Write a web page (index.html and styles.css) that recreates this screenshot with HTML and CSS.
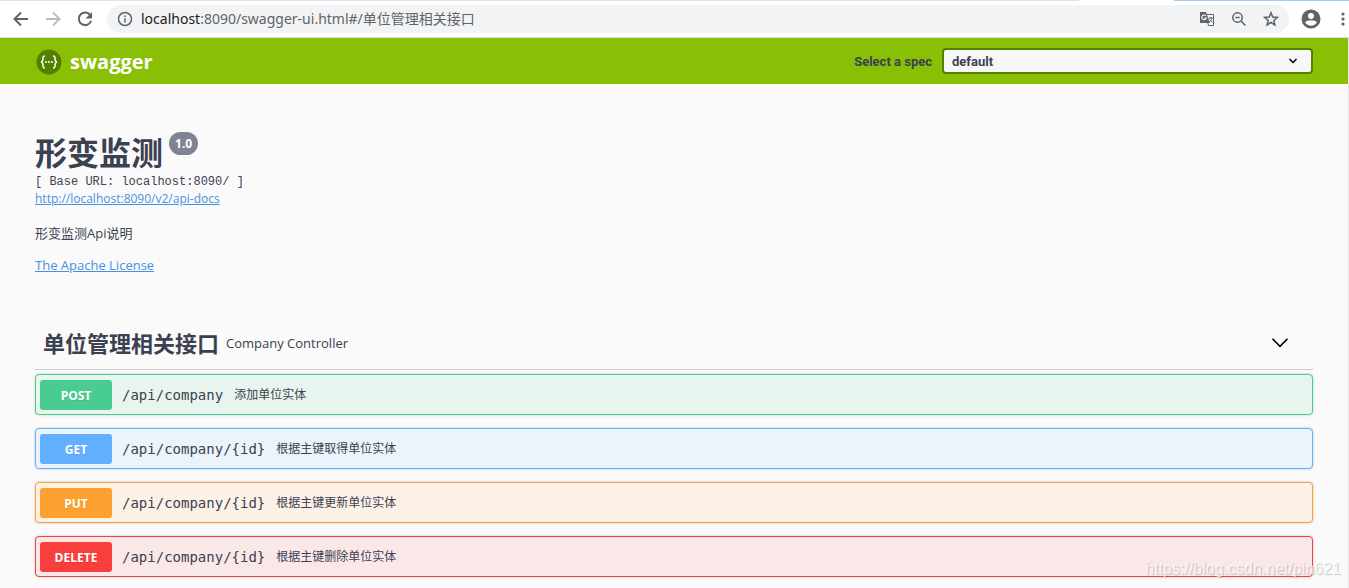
FILE: index.html
```html
<!DOCTYPE html>
<html lang="zh-CN">
<head>
<meta charset="utf-8">
<title>Swagger UI</title>
<link rel="stylesheet" href="styles.css">
</head>
<body>
<div class="tabline"></div>
<header class="browser">
  <nav class="nav">
    <button class="icon-btn" aria-label="Back"><svg class="ink" width="24" height="24" viewBox="0 0 24 24"><path d="M19 12H6M12 5.5 5.5 12l6.500 6.500"/></svg></button>
    <button class="icon-btn" aria-label="Forward"><svg class="ink faded" width="24" height="24" viewBox="0 0 24 24"><path d="M5 12h13M12 5.500 18.500 12 12 18.500"/></svg></button>
    <button class="icon-btn" aria-label="Reload"><svg class="ink" width="24" height="24" viewBox="0 0 24 24"><path d="M17.500 8.500A6.300 6.300 0 1 0 18.100 13.800"/><path class="solid" d="M19 5v6.500h-6.500z"/></svg></button>
  </nav>
  <div class="omnibox">
    <svg class="ink thin" width="16" height="16" viewBox="0 0 16 16"><circle cx="8" cy="8" r="6.500"/><path d="M8 7.200v4.200M8 4.500v1.500"/></svg>
    <div class="address"><span class="host">localhost</span>:8090/swagger-ui.html#/单位管理相关接口</div>
    <button class="icon-btn" aria-label="Translate"><svg width="16" height="16" viewBox="0 0 16 16"><path d="M6.500 3.500h8v11H9.500z" fill="#f8f9fa" stroke="#5f6368"/><path d="M1 1h6l3.800 11H1z" fill="#5f6368"/><path d="M7 5A2.300 2.300 0 1 0 7.300 7H5.200" fill="none" stroke="#fff" stroke-width="1.100"/><path d="M9.500 7h4.500M11.700 6v1M13 7c-.4 2-1.500 3-3 4M10.700 8.500l2.800 3" fill="none" stroke="#5f6368"/></svg></button>
    <button class="icon-btn" aria-label="Zoom"><svg class="ink thin" width="16" height="16" viewBox="0 0 16 16"><circle cx="6.500" cy="6.500" r="4.700"/><path d="m10 10 4.500 4.500M4.300 6.500h4.400"/></svg></button>
    <button class="icon-btn" aria-label="Bookmark"><svg class="ink thin" width="16" height="16" viewBox="0 0 16 16"><path d="m8 1.800 1.700 4.300 4.600.3-3.500 3 1.100 4.500L8 11.500l-3.900 2.400 1.100-4.500-3.500-3 4.600-.3z"/></svg></button>
  </div>
  <button class="icon-btn" aria-label="Profile"><svg width="20" height="20" viewBox="0 0 20 20"><circle cx="10" cy="10" r="9.500" fill="#5f6368"/><circle cx="10" cy="7" r="3" fill="#fff"/><path d="M4.200 13.500c1.500-3 10.100-3 11.600 0-2.600 4.200-9 4.200-11.600 0z" fill="#fff"/></svg></button>
  <button class="icon-btn menu" aria-label="Menu"><svg width="4" height="16" viewBox="0 0 4 16" fill="#5f6368"><circle cx="2" cy="3" r="1.600"/><circle cx="2" cy="8" r="1.600"/><circle cx="2" cy="13" r="1.600"/></svg></button>
</header>
<main class="page">
  <div class="topbar">
    <a class="brand" href="#">
      <svg width="26" height="26" viewBox="0 0 26 26"><circle cx="13" cy="13" r="12.500" fill="#547f00"/><path d="M9 7c-2 0-2 .8-2 2.500S7 12.800 5 13c2 .2 2 1.800 2 3.500S7 19 9 19M17 7c2 0 2 .8 2 2.500s0 3.300 2 3.500c-2 .2-2 1.800-2 3.500S19 19 17 19" fill="none" stroke="#fff" stroke-width="1.500"/><g fill="#fff"><circle cx="10" cy="13" r="1"/><circle cx="13" cy="13" r="1"/><circle cx="16" cy="13" r="1"/></g></svg>
      <span>swagger</span>
    </a>
    <label class="spec-label" for="spec">Select a spec</label>
    <span class="select-wrap">
      <select class="spec" id="spec"><option>default</option></select>
      <svg class="select-arrow" width="10" height="8" viewBox="0 0 10 8"><path d="m1.500 2 3.500 3.500L8.500 2" fill="none" stroke="#000" stroke-width="1.500"/></svg>
    </span>
  </div>
  <section class="info">
    <div class="title-row"><h1>形变监测</h1><span class="version">1.0</span></div>
    <div class="base">[ Base URL: localhost:8090/ ]</div>
    <a class="docs" href="#">http://localhost:8090/v2/api-docs</a>
    <p class="about">形变监测Api说明</p>
    <a class="license" href="#">The Apache License</a>
  </section>
  <section class="ops">
    <div class="tag">
      <h2>单位管理相关接口</h2><span class="tag-note">Company Controller</span>
      <button class="icon-btn" aria-label="Collapse"><svg width="18" height="12" viewBox="0 0 18 12"><path d="m1.500 1.800 7.500 7.500 7.500-7.500" fill="none" stroke="#000" stroke-width="1.600"/></svg></button>
    </div>
    <div class="op post"><button class="method">POST</button><span class="path">/api/company</span><span class="summary">添加单位实体</span></div>
    <div class="op get"><button class="method">GET</button><span class="path">/api/company/{id}</span><span class="summary">根据主键取得单位实体</span></div>
    <div class="op put"><button class="method">PUT</button><span class="path">/api/company/{id}</span><span class="summary">根据主键更新单位实体</span></div>
    <div class="op delete"><button class="method">DELETE</button><span class="path">/api/company/{id}</span><span class="summary">根据主键删除单位实体</span></div>
  </section>
</main>
<div class="watermark">https://blog.csdn.net/pin621</div>
</body>
</html>
```
FILE: styles.css
```css
* { box-sizing: border-box; }
body {
  margin: 0;
  min-height: 100vh;
  position: relative;
  display: flex;
  flex-direction: column;
  background: #fff;
  color: #3b4151;
  font-family: "Open Sans", "Noto Sans CJK SC", sans-serif;
}
.tabline { height: 1px; background: linear-gradient(90deg, #dee1e6 80%, #fff 80%, #fff 87%, #a8cbf3 87%); }
.browser { display: flex; align-items: center; height: 37px; padding: 0 4px 0 9px; border-bottom: 1px solid #dcdde0; }
.nav { display: flex; gap: 8px; margin-right: 10px; }
.icon-btn { display: flex; padding: 0; border: 0; background: none; }
.ink { fill: none; stroke: #5f6368; stroke-width: 2; }
.ink.faded { stroke: #babcbe; }
.ink.thin { stroke-width: 1.500; }
.ink .solid { fill: #5f6368; stroke: none; }
.omnibox { flex: 1; display: flex; align-items: center; gap: 16px; height: 28px; padding: 0 10px; border-radius: 14px; background: #f1f3f4; }
.address { flex: 1; margin-left: -8px; font-family: "Noto Sans", "Noto Sans CJK SC", sans-serif; font-size: 14px; line-height: 20px; color: #5f6368; }
.host { color: #202124; }
.browser > .icon-btn { margin-left: 12px; }
.browser > .menu { margin-left: 20px; }
.page { flex: 1; margin-right: 1px; background: #fafafa; box-shadow: 1px 0 #e8e8e8; padding-bottom: 10px; }
.topbar { display: flex; align-items: center; height: 46px; padding: 0 35px; background: #89bf04; font-weight: 700; }
.brand { display: flex; align-items: center; gap: 8px; margin: 2px auto 0 1px; color: #fff; font-size: 20px; line-height: 26px; text-decoration: none; }
.spec-label { margin-right: 10px; font-family: Roboto, sans-serif; font-size: 13px; }
.select-wrap { position: relative; width: 371px; display: flex; }
.spec { width: 100%; height: 26px; padding: 0 8px; appearance: none; border: 2px solid #547f00; border-radius: 4px; background: #f7f7f7; color: #3b4151; font: 700 13px Roboto, sans-serif; }
.select-arrow { position: absolute; right: 15px; top: 9px; pointer-events: none; }
.info { display: flex; flex-direction: column; align-items: flex-start; padding: 48px 35px 0; }
.title-row { display: flex; align-items: flex-start; gap: 6px; }
h1 { margin: 1px 0 0; font-size: 32px; line-height: 40px; }
.version { padding: 0 6px; border-radius: 12px; background: #7d8492; color: #fff; font-size: 12px; font-weight: 700; line-height: 23px; }
.base { margin-top: 1px; font-family: "Liberation Mono", monospace; font-size: 12px; line-height: 16px; }
.docs, .license { color: #4990e2; }
.docs { font-size: 12px; line-height: 18px; }
.about { margin: 16px 0 14px; font-size: 13px; line-height: 18px; }
.license { font-size: 13px; line-height: 18px; }
.ops { display: flex; flex-direction: column; gap: 13px; padding: 43px 35px 0; }
.tag { display: flex; align-items: center; height: 53px; margin-bottom: -9px; padding: 0 24px 0 8px; border-bottom: 1px solid #c8c9cc; }
h2 { margin: 0 7px 0 0; font-size: 22px; line-height: 32px; }
.tag-note { flex: 1; font-size: 13px; }
.op { display: flex; align-items: center; padding: 5px 4px 4px; border: 1px solid; border-radius: 4px; box-shadow: 0 0 3px rgba(0, 0, 0, .19); }
.method { width: 72px; height: 30px; padding: 0; border: 0; border-radius: 3px; color: #fff; font: 700 12px "Open Sans", sans-serif; text-shadow: 0 1px 0 rgba(0, 0, 0, .1); }
.path { margin: 0 11px 0 10px; font: 14px "DejaVu Sans Mono", monospace; }
.summary { font-size: 12px; line-height: 18px; }
.post { border-color: #49cc90; background: #e8f5ee; }
.post .method { background: #49cc90; }
.get { border-color: #61affe; background: #ebf3fb; }
.get .method { background: #61affe; }
.put { border-color: #fca130; background: #fbf1e6; }
.put .method { background: #fca130; }
.delete { border-color: #f93e3e; background: #fae7e7; }
.delete .method { background: #f93e3e; }
.watermark { position: absolute; right: 8px; bottom: 9px; font: 16px/20px "Liberation Sans", sans-serif; color: rgba(255, 255, 255, .7); text-shadow: 1px 1px 1px rgba(0, 0, 0, .2); pointer-events: none; }
```
